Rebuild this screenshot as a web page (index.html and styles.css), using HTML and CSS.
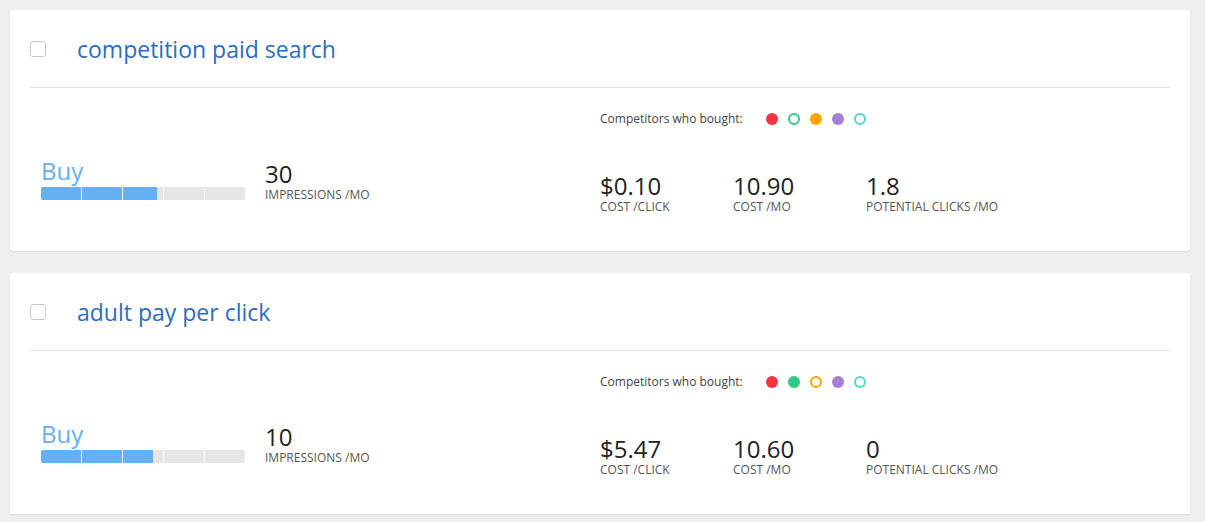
FILE: index.html
```html
<!DOCTYPE html>
<html>
<head>
<meta charset="utf-8">
<link rel="stylesheet" href="styles.css">
</head>
<body>
<div class="list">
  <div class="card">
    <div class="card-head">
      <span class="checkbox"></span>
      <span class="title">competition paid search</span>
    </div>
    <div class="card-body">
      <div class="left">
        <div class="buy-col">
          <div class="buy">Buy</div>
          <div class="bar"><div class="fill" style="width:116px"></div></div>
        </div>
        <div class="stat imp">
          <div class="num">30</div>
          <div class="lbl">IMPRESSIONS /MO</div>
        </div>
      </div>
      <div class="right">
        <div class="competitors">
          <span class="comp-label">Competitors who bought:</span>
          <span class="dots">
            <span class="dot red"></span>
            <span class="dot green ring"></span>
            <span class="dot orange"></span>
            <span class="dot purple"></span>
            <span class="dot teal ring"></span>
          </span>
        </div>
        <div class="stats">
          <div class="stat"><div class="num">$0.10</div><div class="lbl">COST /CLICK</div></div>
          <div class="stat"><div class="num">10.90</div><div class="lbl">COST /MO</div></div>
          <div class="stat"><div class="num">1.8</div><div class="lbl">POTENTIAL CLICKS /MO</div></div>
        </div>
      </div>
    </div>
  </div>

  <div class="card">
    <div class="card-head">
      <span class="checkbox"></span>
      <span class="title">adult pay per click</span>
    </div>
    <div class="card-body">
      <div class="left">
        <div class="buy-col">
          <div class="buy">Buy</div>
          <div class="bar"><div class="fill" style="width:112px"></div></div>
        </div>
        <div class="stat imp">
          <div class="num">10</div>
          <div class="lbl">IMPRESSIONS /MO</div>
        </div>
      </div>
      <div class="right">
        <div class="competitors">
          <span class="comp-label">Competitors who bought:</span>
          <span class="dots">
            <span class="dot red"></span>
            <span class="dot green"></span>
            <span class="dot orange ring"></span>
            <span class="dot purple"></span>
            <span class="dot teal ring"></span>
          </span>
        </div>
        <div class="stats">
          <div class="stat"><div class="num">$5.47</div><div class="lbl">COST /CLICK</div></div>
          <div class="stat"><div class="num">10.60</div><div class="lbl">COST /MO</div></div>
          <div class="stat"><div class="num">0</div><div class="lbl">POTENTIAL CLICKS /MO</div></div>
        </div>
      </div>
    </div>
  </div>
</div>
</body>
</html>
```

FILE: styles.css
```css
html, body {
  margin: 0;
  padding: 0;
  background: #efefef;
  font-family: "Open Sans", "Liberation Sans", sans-serif;
}

.list {
  padding: 10px 15px 10px 10px;
  display: flex;
  flex-direction: column;
  gap: 22px;
}

.card {
  background: #fff;
  border-radius: 3px;
  box-shadow: 0 1px 2px rgba(0, 0, 0, 0.08);
  height: 241px;
  padding: 0 20px;
  box-sizing: border-box;
}

.card-head {
  height: 77px;
  display: flex;
  align-items: center;
  border-bottom: 1px solid #e3e3e3;
}

.checkbox {
  width: 14px;
  height: 14px;
  border: 1px solid #c9c9c9;
  border-radius: 3px;
  background: #fff;
  flex: 0 0 auto;
}

.title {
  margin-left: 31px;
  font-size: 23px;
  line-height: 32px;
  color: #2d6cc0;
}

.card-body {
  display: flex;
  align-items: flex-start;
  padding: 23px 0 0 11px;
}

.left {
  flex: 0 0 559px;
  display: flex;
  align-items: flex-start;
}

.buy-col {
  margin-top: 46px;
  width: 204px;
}

.buy {
  font-size: 24px;
  line-height: 28px;
  color: #64b0f4;
}

.bar {
  margin-top: 2px;
  height: 13px;
  background: #e6e6e6;
  border-radius: 2px;
  position: relative;
  overflow: hidden;
}

.fill {
  height: 100%;
  background: #64b0f4;
}

.bar::after {
  content: "";
  position: absolute;
  inset: 0;
  background: repeating-linear-gradient(90deg, transparent 0, transparent 40px, #fff 40px, #fff 41px);
}

.imp {
  margin-left: 20px;
  margin-top: 49px;
}

.num {
  font-size: 24px;
  line-height: 27px;
  color: #222;
}

.lbl {
  font-size: 12px;
  line-height: 16px;
  color: #555;
}

.right {
  flex: 1;
}

.competitors {
  display: flex;
  align-items: center;
  height: 16px;
}

.comp-label {
  font-size: 12px;
  line-height: 16px;
  color: #444;
}

.dots {
  display: flex;
  gap: 10px;
  margin-left: 23px;
}

.dot {
  width: 12px;
  height: 12px;
  border-radius: 50%;
  box-sizing: border-box;
}

.dot.red { background: #f8333f; }
.dot.green { background: #2ecc87; }
.dot.orange { background: #ffa500; }
.dot.purple { background: #a57ed8; }
.dot.teal { background: #4ddbc6; }

.dot.ring { background: #fff; border: 2px solid; }
.dot.green.ring { border-color: #2ecc87; }
.dot.orange.ring { border-color: #ffa500; }
.dot.teal.ring { border-color: #4ddbc6; }

.stats {
  display: flex;
  margin-top: 45px;
}

.stats .stat {
  width: 133px;
}
```
